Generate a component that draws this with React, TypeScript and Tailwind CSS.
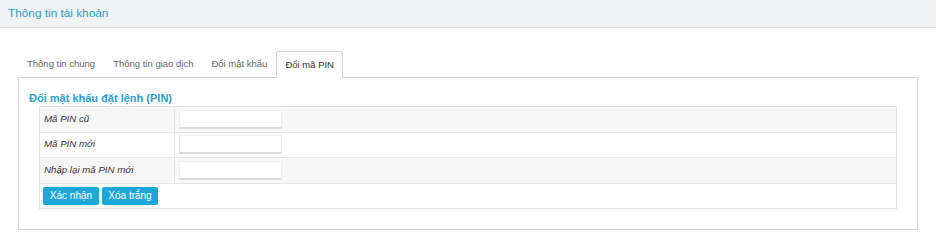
import React from 'react'

const tabs = ['Thông tin chung', 'Thông tin giao dịch', 'Đổi mật khẩu', 'Đổi mã PIN']

const rows = ['Mã PIN cũ', 'Mã PIN mới', 'Nhập lại mã PIN mới']

export default function App() {
  return (
    <div className="w-[936px] h-[242px] bg-white font-['Liberation_Sans',Arial,sans-serif]">
      <div className="h-[28px] bg-[#f1f2f4] border-b border-[#d6d8db] flex items-center px-[8px]">
        <h1 className="text-[11.8px] text-[#2a9fd6]">Thông tin tài khoản</h1>
      </div>

      <div className="px-[18px] pt-[23px] w-[918px] box-content">
        {/* tabs */}
        <div className="flex items-end h-[26px] relative z-10">
          {tabs.map((tab, i) => (
            <div
              key={tab}
              className={
                i === tabs.length - 1
                  ? 'h-[27px] -mb-[1px] px-[8px] flex items-center text-[9.5px] text-[#333] bg-white border border-b-0 border-[#d3d5d8] rounded-t-[3px]'
                  : 'h-[26px] px-[9px] flex items-center text-[9.5px] text-[#666]'
              }
            >
              {tab}
            </div>
          ))}
        </div>

        {/* panel */}
        <div className="w-[900px] h-[153px] border border-[#d3d5d8] pt-[12px] px-[20px]">
          <h2 className="-ml-[10px] text-[11px] font-bold text-[#2a9fd6] leading-[16px]">Đổi mật khẩu đặt lệnh (PIN)</h2>
          <div className="w-[858px] border border-[#e3e3e3]">
            {rows.map((label, i) => (
              <div
                key={label}
                className={`flex h-[25.5px] border-b border-[#e6e6e6] ${i % 2 === 0 ? 'bg-[#f7f7f7]' : 'bg-white'}`}
              >
                <div className="w-[135px] border-r border-[#e6e6e6] flex items-center pl-[4px] text-[9.7px] italic text-[#333]">
                  {label}
                </div>
                <div className="flex items-center pl-[4px]">
                  <input
                    type="password"
                    className="w-[103px] h-[19px] bg-white border border-[#eeeeee] border-b-[2px] border-b-[#dcdcdc] outline-none"
                  />
                </div>
              </div>
            ))}
            <div className="flex items-center gap-[3px] h-[24px] pl-[3px] bg-white">
              <button className="h-[18px] w-[56px] rounded-[2px] bg-[#1fa6d8] text-white text-[10px]">Xác nhận</button>
              <button className="h-[18px] w-[56px] rounded-[2px] bg-[#1fa6d8] text-white text-[10px]">Xóa trắng</button>
            </div>
          </div>
        </div>
      </div>
    </div>
  )
}
